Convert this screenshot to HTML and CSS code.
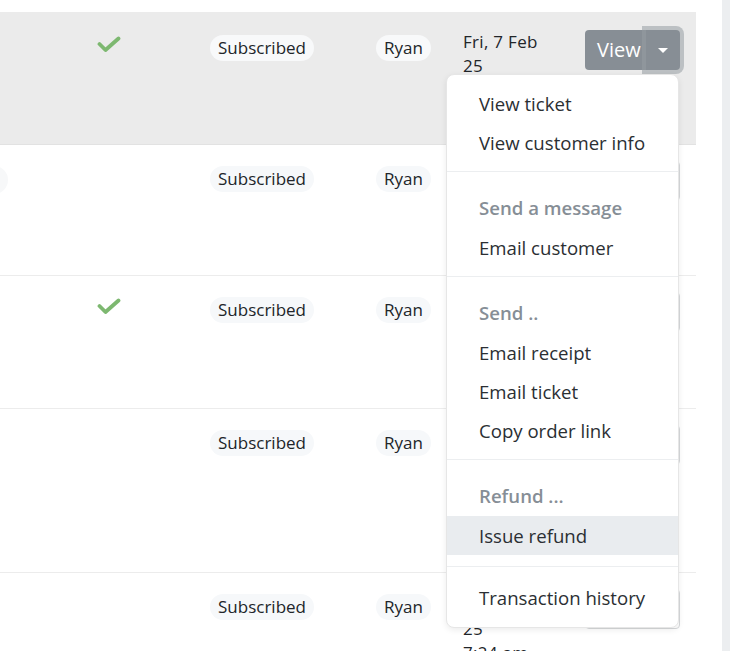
FILE: index.html
```html
<!DOCTYPE html>
<html lang="en">
<head>
<meta charset="utf-8">
<title>Orders</title>
<link rel="stylesheet" href="styles.css">
</head>
<body>
<div class="page">
  <div class="table">
    <div class="row active h132">
      <div class="cell"></div>
      <div class="cell check-cell"><svg class="check" viewBox="0 0 24 17"><polyline points="2.5,8 8.5,14 21.5,2.5"/></svg></div>
      <div class="cell"><span class="pill">Subscribed</span></div>
      <div class="cell"><span class="pill">Ryan</span></div>
      <div class="cell date">Fri, 7 Feb<br>25</div>
      <div class="cell">
        <div class="btn-group">
          <span class="btn-main">View</span>
          <span class="btn-toggle"><span class="caret"></span></span>
        </div>
      </div>
    </div>
    <div class="row h131">
      <div class="cell"><span class="pill-cut"></span></div>
      <div class="cell check-cell"></div>
      <div class="cell"><span class="pill">Subscribed</span></div>
      <div class="cell"><span class="pill">Ryan</span></div>
      <div class="cell date"></div>
      <div class="cell"><span class="btn-ghost"></span></div>
    </div>
    <div class="row h132">
      <div class="cell"></div>
      <div class="cell check-cell"><svg class="check" viewBox="0 0 24 17"><polyline points="2.5,8 8.5,14 21.5,2.5"/></svg></div>
      <div class="cell"><span class="pill">Subscribed</span></div>
      <div class="cell"><span class="pill">Ryan</span></div>
      <div class="cell date"></div>
      <div class="cell"><span class="btn-ghost"></span></div>
    </div>
    <div class="row h164">
      <div class="cell"></div>
      <div class="cell check-cell"></div>
      <div class="cell"><span class="pill">Subscribed</span></div>
      <div class="cell"><span class="pill">Ryan</span></div>
      <div class="cell date"></div>
      <div class="cell"><span class="btn-ghost"></span></div>
    </div>
    <div class="row last">
      <div class="cell"></div>
      <div class="cell check-cell"></div>
      <div class="cell"><span class="pill">Subscribed</span></div>
      <div class="cell"><span class="pill">Ryan</span></div>
      <div class="cell date late">25<br>7:24 am</div>
      <div class="cell"><span class="btn-ghost"></span></div>
    </div>
  </div>
  <div class="scrollbar"></div>

  <div class="menu">
    <div class="item">View ticket</div>
    <div class="item">View customer info</div>
    <div class="divider"></div>
    <div class="header">Send a message</div>
    <div class="item">Email customer</div>
    <div class="divider"></div>
    <div class="header">Send ..</div>
    <div class="item">Email receipt</div>
    <div class="item">Email ticket</div>
    <div class="item">Copy order link</div>
    <div class="divider"></div>
    <div class="header">Refund ...</div>
    <div class="item hover">Issue refund</div>
    <div class="divider wide"></div>
    <div class="item">Transaction history</div>
  </div>
</div>
</body>
</html>
```

FILE: styles.css
```css
* { box-sizing: border-box; }
html, body { margin: 0; padding: 0; background: #fff; }
body {
  font-family: "Open Sans", "Noto Sans", sans-serif;
  color: #212529;
  overflow: hidden;
}
.page {
  position: relative;
  width: 730px;
  height: 651px;
  display: flex;
  overflow: hidden;
}
.table {
  width: 696px;
  padding-top: 12px;
  display: flex;
  flex-direction: column;
}
.row {
  display: grid;
  grid-template-columns: 80px 130px 166px 87px 122px 111px;
  align-items: start;
  padding-top: 16px;
  border-bottom: 1px solid #ececec;
  flex: none;
}
.row.active { background: #ebebeb; padding-top: 18px; border-bottom-color: #e2e2e2; }
.h132 { height: 133px; }
.h131 { height: 131px; }
.h164 { height: 164px; }
.row.last { flex: 1; border-bottom: 0; }
.cell { min-width: 0; }
.check-cell { padding-left: 17px; padding-top: 6px; }
.check { width: 24px; height: 17px; display: block; }
.check polyline {
  fill: none;
  stroke: #7db870;
  stroke-width: 3.8;
  stroke-linecap: round;
  stroke-linejoin: round;
}
.pill {
  display: inline-block;
  margin-top: 5px;
  height: 26px;
  line-height: 26px;
  padding: 0 8px;
  border-radius: 13px;
  background: #f6f8fa;
  font-size: 17px;
  font-weight: 500;
  color: #212529;
  white-space: nowrap;
}
.row.active .pill { background: #f8f9fa; }
.pill-cut {
  display: block;
  margin-top: 5px;
  margin-left: -50px;
  width: 58px;
  height: 28px;
  border-radius: 14px;
  background: #f7f8f9;
}
.date {
  font-size: 17px;
  font-weight: 500;
  line-height: 24px;
  letter-spacing: 0.3px;
  color: #212529;
}
.date.late { padding-top: 28px; }
.btn-group { display: flex; width: 95px; height: 40px; }
.btn-main {
  width: 61px;
  height: 40px;
  background: #878e95;
  color: #fff;
  font-size: 20px;
  line-height: 40px;
  padding-left: 12px;
  border-radius: 4px 0 0 4px;
}
.btn-toggle {
  width: 34px;
  height: 40px;
  background: #878e95;
  border-radius: 0 4px 4px 0;
  box-shadow: 0 0 0 4px rgba(150, 156, 162, 0.55);
  display: flex;
  align-items: center;
  justify-content: center;
  position: relative;
  z-index: 1;
}
.caret {
  width: 0; height: 0;
  border-left: 5px solid transparent;
  border-right: 5px solid transparent;
  border-top: 5px solid #fff;
}
.btn-ghost {
  display: block;
  width: 95px;
  height: 40px;
  border: 1px solid #d6d8da;
  border-radius: 4px;
  background: #fff;
}
.scrollbar {
  width: 8px;
  height: 651px;
  margin-left: auto;
  background: #eceef0;
}
.menu {
  position: absolute;
  left: 446px;
  top: 74px;
  width: 233px;
  height: 554px;
  background: #fff;
  border: 1px solid #e6e6e6;
  border-radius: 8px;
  box-shadow: 0 2px 6px rgba(0, 0, 0, 0.08);
  padding: 9px 0 10px;
  z-index: 5;
}
.item {
  font-size: 18.6px;
  line-height: 27px;
  padding: 6px 32px;
  color: #2b2f33;
  white-space: nowrap;
}
.item.hover { background: #e9ecef; }
.header {
  font-size: 18.6px;
  line-height: 27px;
  padding: 13px 32px 7px;
  color: #868e96;
  font-weight: 600;
  white-space: nowrap;
}
.divider {
  height: 1px;
  background: #eceef0;
  margin: 9px 0;
}
.divider.wide { margin: 11px 0; }
```
